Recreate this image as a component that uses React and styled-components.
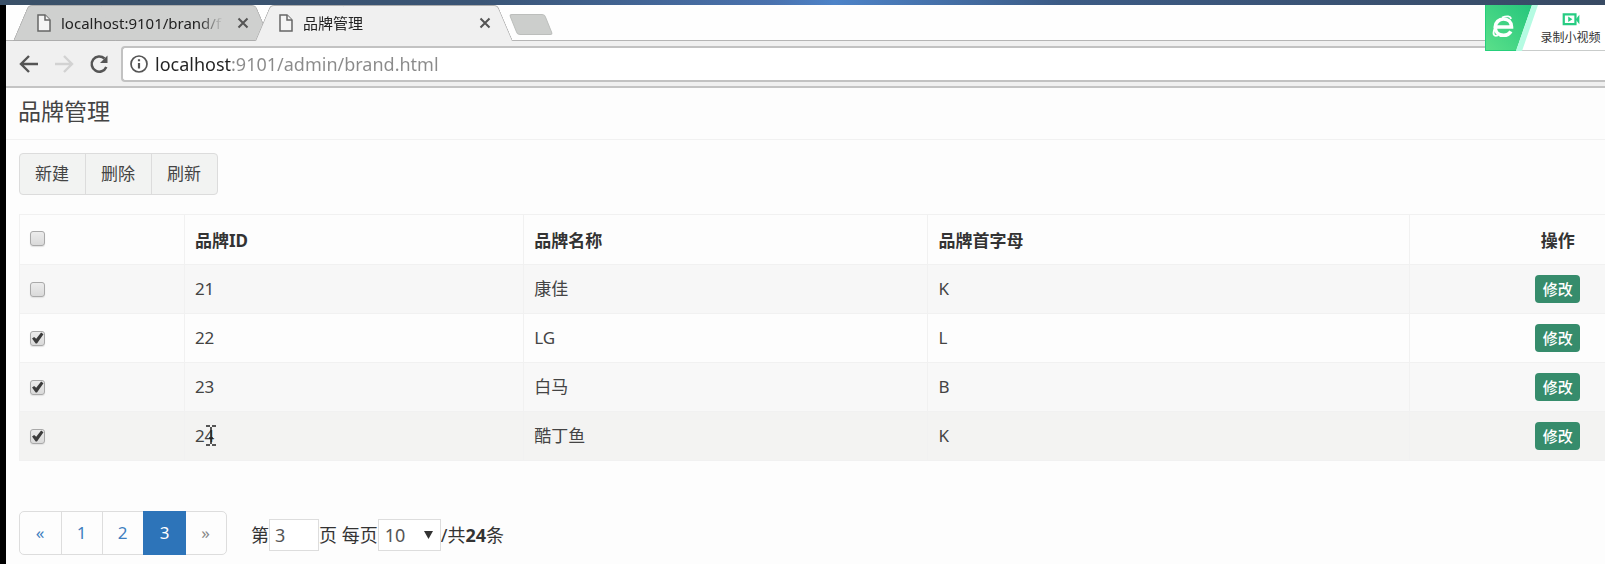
import React, { useState } from "react";
import styled, { createGlobalStyle } from "styled-components";

const GlobalStyle = createGlobalStyle`
  * {
    box-sizing: border-box;
  }

  body {
    margin: 0;
    background: #fdfdfd;
    color: #333;
    font-family: "Noto Sans", "Noto Sans CJK SC", sans-serif;
    font-size: 17px;
    line-height: 24px;
    overflow: hidden;
  }

  button,
  input,
  select {
    font: inherit;
    color: inherit;
  }
`;

const Desktop = styled.div`
  display: flex;
  flex-direction: column;
  min-height: 100vh;
`;

const DesktopStrip = styled.div`
  height: 5px;
  background: linear-gradient(90deg, #3a5068, #3a5576 30%, #4a72ae 48%, #4d83c8 52%, #3c5b85 66%, #384a63);
`;

const Window = styled.div`
  position: relative;
  flex: 1;
  border-left: 6px solid #000;
`;

const TabStrip = styled.div`
  display: flex;
  align-items: flex-start;
  height: 36px;
  padding-left: 7px;
  background: #fefefe;
  box-shadow: inset 0 -1px #b5b5b5;
`;

const Tab = styled.div`
  position: relative;
  isolation: isolate;
  display: flex;
  align-items: center;
  width: 258px;
  height: 36px;
  padding: 0 22px 0 24px;
  z-index: ${({ $active }) => ($active ? 1 : 0)};

  & + & {
    margin-left: -16px;
  }

  &::before,
  &::after {
    content: "";
    position: absolute;
    z-index: -1;
    top: 0;
    bottom: 0;
    background: ${({ $active }) => ($active ? "#f0f0f0" : "#cfd0cf")};
    border: 0 solid #adadad;
    border-top-width: 1px;
    border-bottom-width: ${({ $active }) => ($active ? 0 : "1px")};
  }

  &::before {
    left: 0;
    right: 50%;
    border-left-width: 1px;
    border-top-left-radius: 4px;
    transform: skewX(-23deg);
    transform-origin: bottom;
  }

  &::after {
    left: 40%;
    right: 0;
    border-right-width: 1px;
    border-top-right-radius: 4px;
    transform: skewX(23deg);
    transform-origin: bottom;
  }
`;

const TabTitle = styled.a`
  flex: 1;
  min-width: 0;
  margin: 0 10px;
  overflow: hidden;
  color: #222;
  font-size: 15px;
  text-decoration: none;
  white-space: nowrap;
  mask-image: linear-gradient(90deg, #000 calc(100% - 28px), transparent calc(100% - 4px));
`;

const IconButton = styled.button`
  display: flex;
  padding: 0;
  border: 0;
  background: none;
  color: #555;

  &:disabled {
    color: #d2d2d2;
  }
`;

const NewTab = styled.button`
  width: 36px;
  height: 21px;
  margin: 9px 0 0;
  padding: 0;
  border: 1px solid #bcbebc;
  border-radius: 3px;
  background: #cccecc;
  transform: skewX(22deg);
`;

const AddressBar = styled.div`
  display: flex;
  align-items: center;
  height: 47px;
  padding: 5px 0 5px 13px;
  gap: 15px;
  background: #f0f0f0;
  border-bottom: 2px solid #c4c4c4;
`;

const Omnibox = styled.label`
  display: flex;
  flex: 1;
  align-items: center;
  gap: 7px;
  height: 36px;
  margin-left: -3px;
  padding-left: 7px;
  background: #fff;
  border: 2px solid #c2c2c2;
  border-right: 0;
  border-radius: 4px 0 0 4px;
  color: #555;
`;

const AddressInput = styled.input`
  flex: 1;
  height: 28px;
  padding: 0;
  border: 0;
  outline: 0;
  background: linear-gradient(90deg, #222 77px, #8a8a8a 77px);
  background-clip: text;
  -webkit-text-fill-color: transparent;
  font-size: 18px;
`;

const Recorder = styled.div`
  position: absolute;
  z-index: 2;
  top: 0;
  right: 0;
  display: flex;
  width: 120px;
  height: 46px;
  background: #fff;
  border-bottom: 1px solid #c9cccb;
`;

const RecorderButton = styled.button`
  display: flex;
  flex-direction: column;
  align-items: center;
  flex: 1;
  padding: 8px 2px 0 0;
  border: 0;
  background: none;
  color: #333;
  font-size: 12px;
  line-height: 24px;
  white-space: nowrap;
`;

const Page = styled.main`
  padding-left: 13px;
`;

const Title = styled.h1`
  height: 52px;
  margin: 0 0 13px -13px;
  padding: 7px 0 0 12px;
  border-bottom: 1px solid #f1f1f1;
  color: #444;
  font-size: 23px;
  font-weight: 400;
  line-height: 32px;
`;

const ButtonGroup = styled.div`
  display: flex;
  width: fit-content;
  border: 1px solid #dcdcdc;
  border-radius: 4px;
  background: #f2f3f2;
  overflow: hidden;
`;

const ToolButton = styled.button`
  height: 40px;
  padding: 0 16px 0 15px;
  border: 0;
  background: none;
  color: #444;

  & + & {
    border-left: 1px solid #dcdcdc;
  }
`;

const Table = styled.table`
  width: 100%;
  margin-top: 19px;
  border-collapse: collapse;
  table-layout: fixed;
`;

const Row = styled.tr`
  height: 49px;
  background: ${({ $shade }) => $shade || "transparent"};
`;

const HeadRow = styled(Row)`
  height: 50px;
`;

const Cell = styled.td`
  position: relative;
  padding: 0 10px;
  border: 1px solid #f1f1f1;
  color: #444;
  text-align: left;
`;

const CheckHead = styled(Cell)`
  padding-bottom: 2px;
`;

const HeadCell = styled(Cell)`
  padding-top: 3px;
  color: #333;
  font-weight: 700;
`;

const ActionCell = styled(Cell)`
  padding: 0 0 0 100px;
  border-right: 0;
  text-align: center;
`;

const ActionHead = styled(ActionCell)`
  padding-top: 3px;
  color: #333;
  font-weight: 700;
`;

const Checkbox = styled.input`
  display: block;
  width: 15px;
  height: 15px;
  margin: 0;
  appearance: none;
  border: 1px solid #a9a9a9;
  border-radius: 3px;
  background: linear-gradient(#ececec, #dadada);
  box-shadow: 0 1px 1px #e2e2e2;

  &:checked::before {
    content: "";
    display: block;
    height: 13px;
    background: #3c3c3c;
    clip-path: polygon(8% 54%, 24% 42%, 40% 56%, 78% 8%, 96% 22%, 46% 92%, 36% 92%);
  }
`;

const EditButton = styled.button`
  display: inline-block;
  width: 45px;
  height: 28px;
  padding: 0;
  border: 0;
  border-radius: 4px;
  background: #368c6c;
  color: #fff;
  font-size: 15px;
  font-weight: 500;
  line-height: 28px;
  vertical-align: middle;
`;

const TextCursor = styled.svg`
  position: absolute;
  top: 13px;
  left: 21px;
`;

const Footer = styled.div`
  display: flex;
  align-items: center;
  gap: 24px;
  margin-top: 50px;
`;

const Pager = styled.nav`
  display: flex;
  border: 1px solid #ddd;
  border-radius: 5px;
`;

const PageLink = styled.a`
  width: 41px;
  margin: -1px 0;
  padding: 9px 0;
  border: 1px solid transparent;
  border-left-color: #ddd;
  color: ${({ $muted }) => ($muted ? "#888" : "#3f7fc0")};
  text-align: center;
  text-decoration: none;

  &:first-child {
    border-left: 0;
  }

  &[aria-current] {
    width: 43px;
    background: #2d74b9;
    border-color: #2d74b9;
    color: #fff;
  }

  &[aria-current] + & {
    width: 40px;
    border-left: 0;
  }
`;

const PageInfo = styled.div`
  display: flex;
  align-items: center;
  margin-top: 3px;
  font-size: 18px;
  white-space: pre;
`;

const PageInput = styled.input`
  width: 50px;
  height: 32px;
  padding: 0 5px;
  border: 1px solid #ddd;
  background: #fff;
  color: #555;
`;

const SelectBox = styled.span`
  position: relative;
  display: flex;

  svg {
    position: absolute;
    top: 12px;
    right: 8px;
    pointer-events: none;
  }
`;

const PageSize = styled.select`
  width: 63px;
  height: 32px;
  padding: 0 6px;
  appearance: none;
  border: 1px solid #ddd;
  border-radius: 0;
  background: #fff;
  color: #555;
`;

const FileIcon = () => (
  <svg width="14" height="18" viewBox="0 0 14 18" fill="#f4f4f4" stroke="#666" strokeWidth="1.5">
    <path d="M1 1h7l5 5v11H1z" />
    <path d="M8 1v5h5" />
  </svg>
);

const CloseIcon = () => (
  <svg width="12" height="12" viewBox="0 0 12 12" stroke="currentColor" strokeWidth="2">
    <path d="M1.500 1.500l9 9M10.500 1.500l-9 9" />
  </svg>
);

const ArrowIcon = ({ flip }) => (
  <svg width="20" height="20" viewBox="0 0 20 20" fill="none" stroke="currentColor" strokeWidth="2.400">
    <path d={flip ? "M1 10h16M10 2l8 8-8 8" : "M19 10H3M10 2l-8 8 8 8"} />
  </svg>
);

const ReloadIcon = () => (
  <svg width="20" height="20" viewBox="0 0 20 20" fill="none" stroke="currentColor" strokeWidth="2.500">
    <path d="M17.300 13A7.600 7.600 0 1 1 15.500 4.500" />
    <path d="M18.500 1.500v7.500h-7.500z" fill="currentColor" stroke="none" />
  </svg>
);

const InfoIcon = () => (
  <svg width="18" height="18" viewBox="0 0 18 18" fill="none" stroke="currentColor" strokeWidth="1.700">
    <circle cx="9" cy="9" r="8" />
    <path d="M9 8v5.500M9 4.300v2" strokeWidth="2.200" />
  </svg>
);

const BrowserLogo = () => (
  <svg width="53" height="46" viewBox="0 0 53 46">
    <defs>
      <linearGradient id="logo" x1="0" y1="1" x2="1" y2="0">
        <stop offset="0" stopColor="#5be08a" />
        <stop offset="1" stopColor="#25c67c" />
      </linearGradient>
    </defs>
    <path d="M0 0h47L31 46H0z" fill="url(#logo)" />
    <path d="M47 0h6L37 46h-6z" fill="#b5fbe2" />
    <path d="M.5 0v45.500H31" fill="none" stroke="#26cf7b" />
    <path d="M11 22h15.500c0-5-3.500-8-8-8s-8.300 3.500-8.300 8.300 3.500 8 8.300 8c3.500 0 6-1.500 7.300-4" fill="none" stroke="#fff" strokeWidth="3.600" />
    <path d="M17 12.500c5-2 8.500-1.500 9 1.500M9.500 24c-2 5-1 8 3.500 6.500" fill="none" stroke="#fff" strokeWidth="1.800" />
  </svg>
);

const CameraIcon = () => (
  <svg width="18" height="14" viewBox="0 0 18 14">
    <path d="M1.200 1.500h12.600v10.500H1.200z" fill="#fff" stroke="#26cc82" strokeWidth="2.400" />
    <path d="M6 3.800v6l4.500-3zM14 7l4-5v10z" fill="#26cc82" />
  </svg>
);

const BRANDS = [
  { id: 21, name: "康佳", letter: "K", shade: "#f7f7f7" },
  { id: 22, name: "LG", letter: "L" },
  { id: 23, name: "白马", letter: "B", shade: "#f8f8f8" },
  { id: 24, name: "酷丁鱼", letter: "K", shade: "#f3f3f2" },
];

export default function App() {
  const [selected, setSelected] = useState([22, 23, 24]);

  const toggle = (id) =>
    setSelected((ids) =>
      ids.includes(id) ? ids.filter((x) => x !== id) : [...ids, id]
    );

  const toggleAll = (e) =>
    setSelected(e.target.checked ? BRANDS.map((b) => b.id) : []);

  return (
    <Desktop>
      <GlobalStyle />
      <DesktopStrip />
      <Window>
        <TabStrip>
          <Tab>
            <FileIcon />
            <TabTitle href="#find">localhost:9101/brand/f</TabTitle>
            <IconButton aria-label="关闭"><CloseIcon /></IconButton>
          </Tab>
          <Tab $active>
            <FileIcon />
            <TabTitle href="#brand">品牌管理</TabTitle>
            <IconButton aria-label="关闭"><CloseIcon /></IconButton>
          </Tab>
          <NewTab aria-label="新标签页" />
        </TabStrip>

        <AddressBar>
          <IconButton aria-label="后退"><ArrowIcon /></IconButton>
          <IconButton aria-label="前进" disabled><ArrowIcon flip /></IconButton>
          <IconButton aria-label="刷新页面"><ReloadIcon /></IconButton>
          <Omnibox>
            <InfoIcon />
            <AddressInput
              aria-label="地址"
              defaultValue="localhost:9101/admin/brand.html"
            />
          </Omnibox>
        </AddressBar>

        <Recorder>
          <BrowserLogo />
          <RecorderButton>
            <CameraIcon />
            录制小视频
          </RecorderButton>
        </Recorder>

        <Page>
          <Title>品牌管理</Title>

          <ButtonGroup>
            <ToolButton>新建</ToolButton>
            <ToolButton>删除</ToolButton>
            <ToolButton>刷新</ToolButton>
          </ButtonGroup>

          <Table>
            <colgroup>
              <col width="10.4%" />
              <col width="21.4%" />
              <col width="25.5%" />
              <col width="30.4%" />
              <col width="12.3%" />
            </colgroup>
            <thead>
              <HeadRow>
                <CheckHead as="th">
                  <Checkbox
                    type="checkbox"
                    aria-label="全选"
                    checked={selected.length === BRANDS.length}
                    onChange={toggleAll}
                  />
                </CheckHead>
                <HeadCell as="th">品牌ID</HeadCell>
                <HeadCell as="th">品牌名称</HeadCell>
                <HeadCell as="th">品牌首字母</HeadCell>
                <ActionHead as="th">操作</ActionHead>
              </HeadRow>
            </thead>
            <tbody>
              {BRANDS.map((brand) => (
                <Row key={brand.id} $shade={brand.shade}>
                  <Cell>
                    <Checkbox
                      type="checkbox"
                      aria-label={brand.name}
                      checked={selected.includes(brand.id)}
                      onChange={() => toggle(brand.id)}
                    />
                  </Cell>
                  <Cell>
                    {brand.id}
                    {brand.id === 24 && (
                      <TextCursor width="10" height="21" viewBox="0 0 10 21" fill="none" stroke="#222" strokeWidth="1.500">
                        <path d="M0 1h4M6 1h4M5 2v17M0 20h4M6 20h4M3 13h4" />
                      </TextCursor>
                    )}
                  </Cell>
                  <Cell>{brand.name}</Cell>
                  <Cell>{brand.letter}</Cell>
                  <ActionCell>
                    <EditButton>修改</EditButton>
                  </ActionCell>
                </Row>
              ))}
            </tbody>
          </Table>

          <Footer>
            <Pager aria-label="分页">
              <PageLink href="#prev">«</PageLink>
              <PageLink href="#1">1</PageLink>
              <PageLink href="#2">2</PageLink>
              <PageLink href="#3" aria-current="page">3</PageLink>
              <PageLink href="#next" $muted>»</PageLink>
            </Pager>
            <PageInfo>
              <label htmlFor="page">第</label>
              <PageInput id="page" defaultValue="3" />
              <label htmlFor="size">页 每页</label>
              <SelectBox>
                <PageSize id="size" defaultValue="10">
                  <option>10</option>
                  <option>20</option>
                  <option>50</option>
                </PageSize>
                <svg width="9" height="8" viewBox="0 0 9 8" fill="#333">
                  <path d="M0 0h9L4.500 8z" />
                </svg>
              </SelectBox>
              /共<b>24</b>条
            </PageInfo>
          </Footer>
        </Page>
      </Window>
    </Desktop>
  );
}
